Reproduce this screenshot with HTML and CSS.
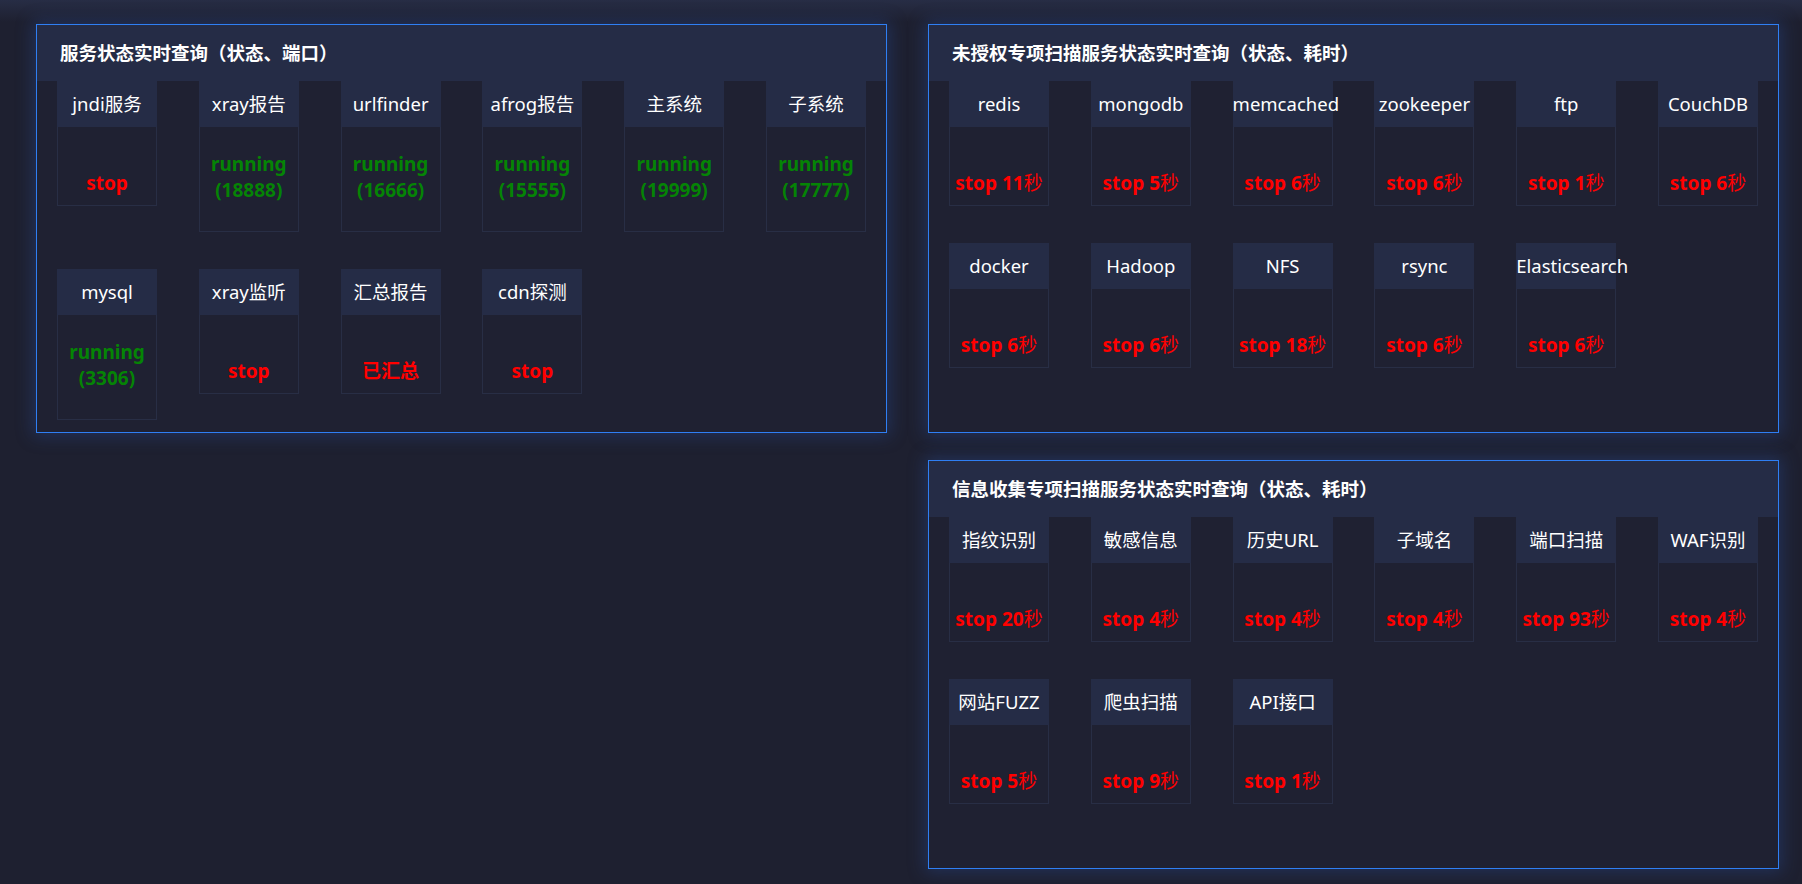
FILE: index.html
```html
<!DOCTYPE html>
<html lang="zh-CN">
<head>
<meta charset="utf-8">
<title>服务状态</title>
<link rel="stylesheet" href="styles.css">
</head>
<body>
<div class="page">
  <div class="col">
    <section class="panel">
      <header class="panel-head">服务状态实时查询（状态、端口）</header>
      <div class="grid">
        <div class="card"><div class="label">jndi服务</div><div class="body single"><span class="red">stop</span></div></div>
        <div class="card"><div class="label">xray报告</div><div class="body"><span class="green">running<br>(18888)</span></div></div>
        <div class="card"><div class="label">urlfinder</div><div class="body"><span class="green">running<br>(16666)</span></div></div>
        <div class="card"><div class="label">afrog报告</div><div class="body"><span class="green">running<br>(15555)</span></div></div>
        <div class="card"><div class="label">主系统</div><div class="body"><span class="green">running<br>(19999)</span></div></div>
        <div class="card"><div class="label">子系统</div><div class="body"><span class="green">running<br>(17777)</span></div></div>
        <div class="card"><div class="label">mysql</div><div class="body"><span class="green">running<br>(3306)</span></div></div>
        <div class="card"><div class="label">xray监听</div><div class="body single"><span class="red">stop</span></div></div>
        <div class="card"><div class="label">汇总报告</div><div class="body single"><span class="red">已汇总</span></div></div>
        <div class="card"><div class="label">cdn探测</div><div class="body single"><span class="red">stop</span></div></div>
      </div>
    </section>
  </div>
  <div class="col">
    <section class="panel">
      <header class="panel-head">未授权专项扫描服务状态实时查询（状态、耗时）</header>
      <div class="grid">
        <div class="card"><div class="label">redis</div><div class="body single"><span class="red">stop 11<span class="unit">秒</span></span></div></div>
        <div class="card"><div class="label">mongodb</div><div class="body single"><span class="red">stop 5<span class="unit">秒</span></span></div></div>
        <div class="card"><div class="label">memcached</div><div class="body single"><span class="red">stop 6<span class="unit">秒</span></span></div></div>
        <div class="card"><div class="label">zookeeper</div><div class="body single"><span class="red">stop 6<span class="unit">秒</span></span></div></div>
        <div class="card"><div class="label">ftp</div><div class="body single"><span class="red">stop 1<span class="unit">秒</span></span></div></div>
        <div class="card"><div class="label">CouchDB</div><div class="body single"><span class="red">stop 6<span class="unit">秒</span></span></div></div>
        <div class="card"><div class="label">docker</div><div class="body single"><span class="red">stop 6<span class="unit">秒</span></span></div></div>
        <div class="card"><div class="label">Hadoop</div><div class="body single"><span class="red">stop 6<span class="unit">秒</span></span></div></div>
        <div class="card"><div class="label">NFS</div><div class="body single"><span class="red">stop 18<span class="unit">秒</span></span></div></div>
        <div class="card"><div class="label">rsync</div><div class="body single"><span class="red">stop 6<span class="unit">秒</span></span></div></div>
        <div class="card"><div class="label">Elasticsearch</div><div class="body single"><span class="red">stop 6<span class="unit">秒</span></span></div></div>
      </div>
    </section>
    <section class="panel">
      <header class="panel-head">信息收集专项扫描服务状态实时查询（状态、耗时）</header>
      <div class="grid">
        <div class="card"><div class="label">指纹识别</div><div class="body single"><span class="red">stop 20<span class="unit">秒</span></span></div></div>
        <div class="card"><div class="label">敏感信息</div><div class="body single"><span class="red">stop 4<span class="unit">秒</span></span></div></div>
        <div class="card"><div class="label">历史URL</div><div class="body single"><span class="red">stop 4<span class="unit">秒</span></span></div></div>
        <div class="card"><div class="label">子域名</div><div class="body single"><span class="red">stop 4<span class="unit">秒</span></span></div></div>
        <div class="card"><div class="label">端口扫描</div><div class="body single"><span class="red">stop 93<span class="unit">秒</span></span></div></div>
        <div class="card"><div class="label">WAF识别</div><div class="body single"><span class="red">stop 4<span class="unit">秒</span></span></div></div>
        <div class="card"><div class="label">网站FUZZ</div><div class="body single"><span class="red">stop 5<span class="unit">秒</span></span></div></div>
        <div class="card"><div class="label">爬虫扫描</div><div class="body single"><span class="red">stop 9<span class="unit">秒</span></span></div></div>
        <div class="card"><div class="label">API接口</div><div class="body single"><span class="red">stop 1<span class="unit">秒</span></span></div></div>
      </div>
    </section>
  </div>
</div>
</body>
</html>
```
FILE: styles.css
```css
html, body {
  margin: 0;
  padding: 0;
}
body {
  width: 1802px;
  height: 884px;
  overflow: hidden;
  background: linear-gradient(#272d45 0px, #1e2030 22px) no-repeat, #1e2030;
  background-size: 100% 30px, auto;
  font-family: "Noto Sans", "Noto Sans CJK SC", sans-serif;
  color: #fff;
}
.page {
  display: grid;
  grid-template-columns: 851px 851px;
  column-gap: 41px;
  padding: 24px 0 0 36px;
  align-items: start;
}
.col {
  display: flex;
  flex-direction: column;
  gap: 27px;
}
.panel {
  box-sizing: border-box;
  width: 851px;
  height: 409px;
  border: 1px solid #2f7ff4;
  background: #1f2132;
  box-shadow: 0 0 16px 3px rgba(40, 72, 140, 0.45);
}
.panel-head {
  height: 56px;
  line-height: 56px;
  padding-left: 23px;
  background: #252c46;
  font-size: 18.5px;
  font-weight: 700;
  color: #fff;
  white-space: nowrap;
}
.grid {
  display: grid;
  grid-template-columns: repeat(6, 100px);
  justify-content: space-between;
  row-gap: 37px;
  padding: 0 20px;
  align-items: start;
}
.card {
  width: 100px;
}
.label {
  height: 46px;
  line-height: 46px;
  background: #252c46;
  text-align: center;
  font-size: 18.5px;
  white-space: nowrap;
  color: #fff;
}
.body {
  box-sizing: border-box;
  height: 105px;
  padding-top: 24px;
  border: 1px solid #282e45;
  border-top: none;
  text-align: center;
  font-size: 19px;
  line-height: 26px;
  font-weight: 700;
  white-space: nowrap;
}
.body.single {
  height: 79px;
  padding-top: 43px;
}
.red {
  color: #ff0000;
}
.green {
  color: #058405;
}
.unit {
  font-weight: 400;
}
```
